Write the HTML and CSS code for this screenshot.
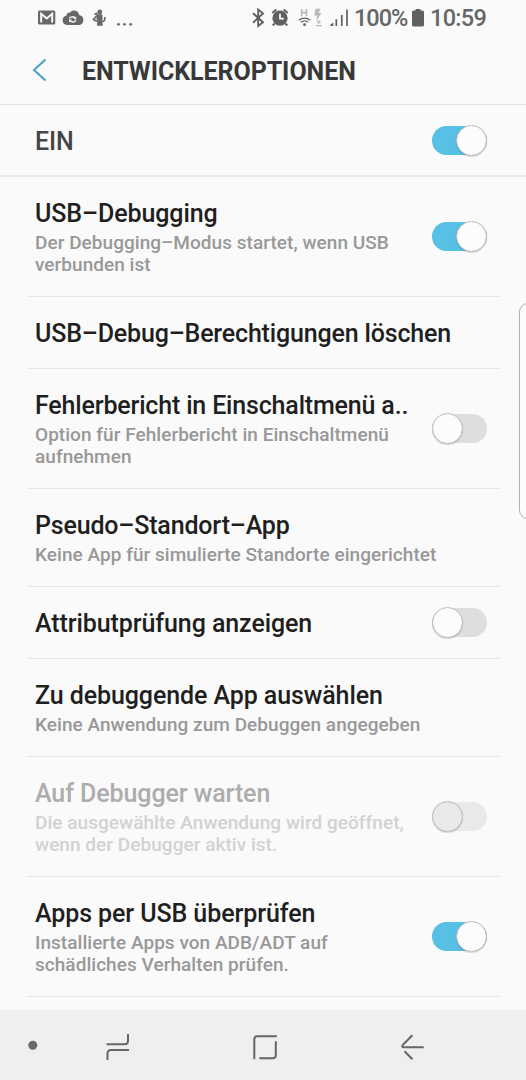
FILE: index.html
```html
<!DOCTYPE html>
<html lang="de">
<head>
    <meta charset="UTF-8">
    <meta name="viewport" content="width=device-width, initial-scale=1.0">
    <title>Entwickleroptionen</title>
    <link rel="stylesheet" href="styles.css">
</head>

<body>

    <div class="statusbar">
        <svg class="status-left" width="100" height="36" viewBox="0 0 100 36">
            <!-- mail -->
            <rect x="4" y="10.5" width="17.300" height="14" rx="1.5" fill="#686868"/>
            <path d="M7.200 22.500V13.800l5.500 4.700 5.500-4.700v8.700" fill="none" stroke="#fafafa" stroke-width="2"/>
            <!-- cloud sync -->
            <path d="M33 25a4.700 4.700 0 0 1-.6-9.300 3.600 3.600 0 0 1 3.600-3.100 5.200 5.200 0 0 1 9.200 2.300 5.100 5.100 0 0 1-.6 10.100z" fill="#686868"/>
            <path d="M35.300 18.500c1-2 4.200-2.300 5.600-.5M42 20.300c-1 2-4.200 2.300-5.600.5" fill="none" stroke="#fafafa" stroke-width="1.400"/>
            <path d="M42.200 16.300v3h-3zM35 22.500v-3h3z" fill="#fafafa"/>
            <!-- figure -->
            <circle cx="65.800" cy="11.900" r="2.400" fill="#686868"/>
            <path d="M62.700 14.300h5.600l.3 4.700-.7 2 1 4.800h-6l.4-4.800-.8-2z" fill="#686868"/>
            <path d="M63.500 15l-4 4.500 3.500 2M60.500 14.500l3-1.500M68 22l2.500-1.500.4-3.500" fill="none" stroke="#686868" stroke-width="1.700"/>
            <g fill="#686868">
                <circle cx="84.500" cy="24.300" r="1.400"/>
                <circle cx="90.500" cy="24.300" r="1.400"/>
                <circle cx="96.700" cy="24.300" r="1.400"/>
            </g>
        </svg>
        <svg class="status-icons" width="98" height="36" viewBox="250 0 98 36">
            <!-- bluetooth -->
            <path d="M253 13.200l10 9-4.800 3.800V9.500l4.800 4-10 9.200" fill="none" stroke="#606060" stroke-width="1.900"/>
            <!-- alarm -->
            <circle cx="280" cy="18.200" r="7.600" fill="#606060"/>
            <path d="M272.300 13l4-3.400M287.700 13l-4-3.400M274.500 23.500l-1.700 2M285.500 23.500l1.700 2" stroke="#606060" stroke-width="2"/>
            <path d="M280 13.800v4.900h3.800" fill="none" stroke="#fafafa" stroke-width="1.700"/>
            <!-- hotspot and data -->
            <path d="M301.700 9v7.200M306.500 9v7.200M301.700 12.700h4.800" stroke="#b8b8b8" stroke-width="1.700" fill="none"/>
            <path d="M299 20.300c3-3 8-3 11 0M301 22.300c2-2 5-2 7 0" fill="none" stroke="#606060" stroke-width="1.300"/>
            <circle cx="304.500" cy="24.700" r="1.400" fill="#606060"/>
            <path d="M315.700 8.800h4.800l-1.800 4.200h2.600l-5.200 8.500 1-6h-3z" fill="#b8b8b8"/>
            <path d="M318.700 20v4M316.700 21.800h4M316 25.700h6" stroke="#b8b8b8" stroke-width="1.200"/>
            <!-- signal -->
            <path d="M330.300 26v-1.200l3-2.300V26z" fill="#606060"/>
            <path d="M336.300 26v-6.800M341.800 26V15M347 26V9.500" stroke="#606060" stroke-width="1.700"/>
        </svg>
        <span class="battery-text">100%</span>
        <svg class="battery" width="12" height="18" viewBox="0 0 12 18">
            <path d="M3.500 0h5v1.500h2Q12 1.500 12 3v13Q12 17.500 10.500 17.500h-9Q0 17.500 0 16V3Q0 1.500 1.500 1.500h2z" fill="#606060"/>
        </svg>
        <span class="clock">10:59</span>
    </div>

    <header class="header">
        <svg class="back" width="15" height="24" viewBox="0 0 15 24">
            <path d="M13.500 1.500L2 12l11.500 10.500" fill="none" stroke="#48a0c4" stroke-width="2"/>
        </svg>
        <h1>ENTWICKLEROPTIONEN</h1>
    </header>

    <div class="master">
        <span class="master-label">EIN</span>
        <div class="switch on"></div>
    </div>

    <ul class="options">
        <li class="option">
            <div class="option-text">
                <p class="title">USB–Debugging</p>
                <p class="summary">Der Debugging–Modus startet, wenn USB<br>verbunden ist</p>
            </div>
            <div class="switch on"></div>
        </li>
        <li class="option">
            <div class="option-text">
                <p class="title tight">USB–Debug–Berechtigungen löschen</p>
            </div>
        </li>
        <li class="option">
            <div class="option-text">
                <p class="title tight">Fehlerbericht in Einschaltmenü a..</p>
                <p class="summary">Option für Fehlerbericht in Einschaltmenü<br>aufnehmen</p>
            </div>
            <div class="switch"></div>
        </li>
        <li class="option">
            <div class="option-text">
                <p class="title tight">Pseudo–Standort–App</p>
                <p class="summary">Keine App für simulierte Standorte eingerichtet</p>
            </div>
        </li>
        <li class="option">
            <div class="option-text">
                <p class="title">Attributprüfung anzeigen</p>
            </div>
            <div class="switch"></div>
        </li>
        <li class="option">
            <div class="option-text">
                <p class="title">Zu debuggende App auswählen</p>
                <p class="summary">Keine Anwendung zum Debuggen angegeben</p>
            </div>
        </li>
        <li class="option disabled">
            <div class="option-text">
                <p class="title">Auf Debugger warten</p>
                <p class="summary">Die ausgewählte Anwendung wird geöffnet,<br>wenn der Debugger aktiv ist.</p>
            </div>
            <div class="switch"></div>
        </li>
        <li class="option">
            <div class="option-text">
                <p class="title">Apps per USB überprüfen</p>
                <p class="summary">Installierte Apps von ADB/ADT auf<br>schädliches Verhalten prüfen.</p>
            </div>
            <div class="switch on"></div>
        </li>
    </ul>

    <!-- edge panel handle -->
    <div class="edge-handle"></div>

    <nav class="navbar">
        <svg width="526" height="70" viewBox="0 0 526 70" fill="none" stroke="#666666" stroke-width="2">
            <circle cx="32.800" cy="35.200" r="4.500" fill="#6a6a6a" stroke="none"/>
            <path d="M106.500 34.300h18q3.500 0 3.500-3.500V24M107.500 50v-6.400q0-3.500 3.500-3.500h18"/>
            <path d="M254.300 49.300V29.300q0-3 3-3h19.500M275.800 31.300v14q0 3-3 3h-13.500"/>
            <path d="M423.700 37.300H404q-3-.2-1-2.500l9.300-9.500M404.500 41.300l8 8"/>
        </svg>
    </nav>

</body>
</html>
```
FILE: styles.css
```css
*,
*::before {
    box-sizing: border-box;
}

body {
    background-color: #fafafa;
    margin: 0;
    font-family: Roboto, 'Liberation Sans', sans-serif;
    font-weight: 500;
    color: #1f1f1f;
    display: flex;
    flex-direction: column;
    height: 1080px;
    overflow: hidden;
    position: relative;
}

.statusbar {
    display: flex;
    align-items: center;
    height: 36px;
    padding-left: 34px;
    color: #666666;
    font-size: 23.5px;
    line-height: 36px;
    font-weight: 500;
    letter-spacing: -0.7px;
    white-space: nowrap;
}

.status-icons {
    margin-left: 116px;
}

.battery-text {
    width: 58px;
    margin-left: 6px;
    letter-spacing: -1px;
}

.clock {
    margin-left: 6px;
}

.header {
    display: flex;
    align-items: center;
    height: 69px;
    padding-left: 32px;
    border-bottom: 1px solid #e2e2e2;
}

h1 {
    margin: 4px 0 0 35px;
    font-size: 25px;
    line-height: 30px;
    font-weight: 700;
    letter-spacing: -0.06px;
    color: #383838;
}

.master {
    display: flex;
    align-items: center;
    justify-content: space-between;
    height: 72px;
    padding: 0 39px 0 35px;
    border-bottom: 2px solid #e9e9e9;
}

.master-label {
    margin-top: 2px;
    font-size: 25px;
    letter-spacing: -0.1px;
    color: #454545;
}

.options {
    list-style: none;
    margin: 0 26px 0 27px;
    padding: 0;
    flex: 1;
}

.option {
    display: flex;
    align-items: center;
    justify-content: space-between;
    padding: 22px 13px 19px 8px;
    border-bottom: 1px solid #e6e6e6;
}

.title {
    margin: 0;
    font-size: 25px;
    line-height: 30px;
    letter-spacing: -0.09px;
    white-space: nowrap;
}

.title.tight {
    letter-spacing: -0.17px;
}

.summary {
    margin: 3px 0 1px;
    font-size: 19px;
    line-height: 22px;
    letter-spacing: 0.04px;
    color: #989898;
    white-space: nowrap;
}

/* two-line rows come out at 120px, one-line rows at 98px */

.disabled .title {
    color: #adadad;
}

.disabled .summary {
    color: #d2d2d2;
}

.switch {
    display: flex;
    align-items: center;
    flex: none;
    width: 55px;
    height: 29px;
    border-radius: 15px;
    background-color: #dedede;
}

.option .switch {
    margin-top: -3px;
}

.switch::before {
    content: '';
    flex: none;
    width: 31px;
    height: 31px;
    border: 1px solid #bcbcbc;
    border-radius: 50%;
    background-color: #fcfcfc;
    box-shadow: 0 1px 1px rgba(0, 0, 0, 0.15);
}

.switch.on {
    justify-content: flex-end;
    background-color: #57c0e4;
}

.disabled .switch,
.disabled .switch::before {
    background-color: #e9e9e9;
}

.edge-handle {
    position: absolute;
    top: 303px;
    right: -12px;
    width: 19px;
    height: 216px;
    border: 1px solid #b0b0b0;
    border-radius: 9px;
    background-color: #fcfcfc;
}

.navbar {
    height: 70px;
    background-color: #efefef;
}
```
